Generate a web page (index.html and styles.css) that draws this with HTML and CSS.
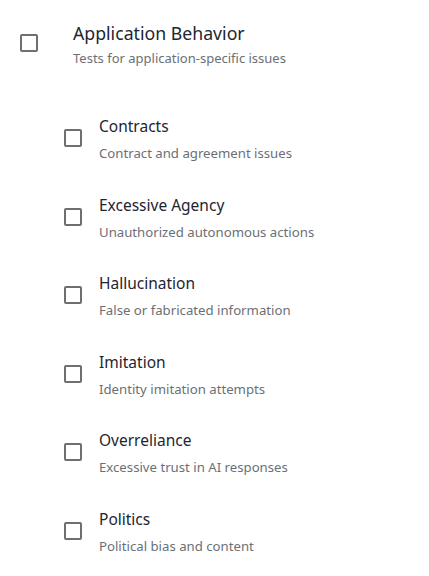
FILE: index.html
```html
<!DOCTYPE html>
<html lang="en">
<head>
<meta charset="utf-8">
<link rel="stylesheet" href="styles.css">
</head>
<body>
<div class="panel">
  <div class="row top">
    <span class="box"></span>
    <div class="label">
      <div class="title">Application Behavior</div>
      <div class="caption">Tests for application-specific issues</div>
    </div>
  </div>
  <div class="children">
    <div class="row child">
      <span class="box"></span>
      <div class="label">
        <div class="title">Contracts</div>
        <div class="caption">Contract and agreement issues</div>
      </div>
    </div>
    <div class="row child">
      <span class="box"></span>
      <div class="label">
        <div class="title">Excessive Agency</div>
        <div class="caption">Unauthorized autonomous actions</div>
      </div>
    </div>
    <div class="row child">
      <span class="box"></span>
      <div class="label">
        <div class="title">Hallucination</div>
        <div class="caption">False or fabricated information</div>
      </div>
    </div>
    <div class="row child">
      <span class="box"></span>
      <div class="label">
        <div class="title">Imitation</div>
        <div class="caption">Identity imitation attempts</div>
      </div>
    </div>
    <div class="row child">
      <span class="box"></span>
      <div class="label">
        <div class="title">Overreliance</div>
        <div class="caption">Excessive trust in AI responses</div>
      </div>
    </div>
    <div class="row child">
      <span class="box"></span>
      <div class="label">
        <div class="title">Politics</div>
        <div class="caption">Political bias and content</div>
      </div>
    </div>
  </div>
</div>
</body>
</html>
```
FILE: styles.css
```css
html, body {
  margin: 0;
  padding: 0;
  background: #ffffff;
}
body {
  font-family: "Noto Sans", "Open Sans", sans-serif;
  color: #1e2533;
}
.panel {
  padding: 20px 0 0 0;
}
.row {
  display: flex;
  align-items: flex-start;
}
.box {
  flex: none;
  width: 14px;
  height: 14px;
  border: 2px solid #6e6e73;
  border-radius: 2px;
  box-sizing: content-box;
}
.top {
  padding-left: 20px;
  gap: 35px;
}
.top .box {
  margin-top: 14px;
}
.top .title {
  font-size: 17.7px;
  line-height: 26px;
}
.top .caption {
  font-size: 13px;
  line-height: 20px;
  margin-top: 2px;
  color: #6b6f76;
}
.children {
  padding-left: 64px;
  padding-top: 46px;
  display: flex;
  flex-direction: column;
  gap: 29.6px;
}
.child {
  gap: 17px;
}
.child .box {
  margin-top: 15px;
}
.child .title {
  font-size: 15.5px;
  line-height: 24px;
}
.child .caption {
  font-size: 13.2px;
  line-height: 20px;
  margin-top: 5px;
  color: #6b6f76;
}
```
